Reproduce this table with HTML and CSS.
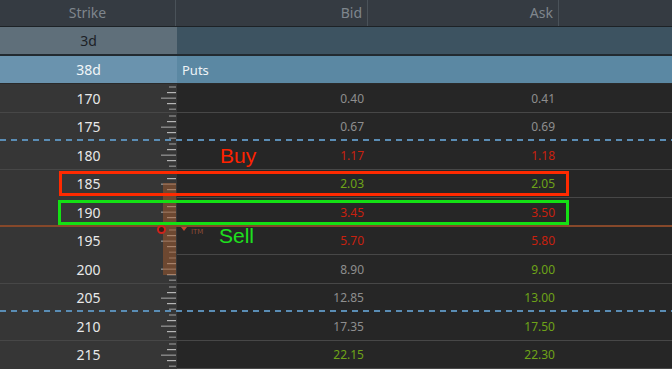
FILE: index.html
```html
<!DOCTYPE html>
<html>
<head>
<meta charset="utf-8">
<link rel="stylesheet" href="styles.css">
</head>
<body>
<div class="chain">
  <div class="hdr">
    <div class="hcell c-strike center">Strike</div>
    <div class="hcell right">Bid</div>
    <div class="hcell right">Ask</div>
    <div class="hcell"></div>
  </div>
  <div class="exp exp-3d">
    <div class="ecell c-strike center">3d</div>
    <div class="ecell"></div>
  </div>
  <div class="exp exp-38d">
    <div class="ecell c-strike center">38d</div>
    <div class="ecell puts">Puts</div>
  </div>

  <div class="rows">
    <div class="row"><div class="strike"><span class="sv">170</span><svg class="ruler" viewBox="0 0 16 28" preserveAspectRatio="none"><use href="#ticks"/></svg></div><div class="num gray">0.40</div><div class="num gray">0.41</div><div></div></div>
    <div class="row dash"><div class="strike"><span class="sv">175</span><svg class="ruler" viewBox="0 0 16 28" preserveAspectRatio="none"><use href="#ticks"/></svg></div><div class="num gray">0.67</div><div class="num gray">0.69</div><div></div></div>
    <div class="row"><div class="strike"><span class="sv">180</span><svg class="ruler" viewBox="0 0 16 28" preserveAspectRatio="none"><use href="#ticks"/></svg></div><div class="num red">1.17</div><div class="num red">1.18</div><div></div></div>
    <div class="row"><div class="strike"><span class="sv">185</span><svg class="ruler" viewBox="0 0 16 28" preserveAspectRatio="none"><use href="#ticks"/></svg></div><div class="num green">2.03</div><div class="num green">2.05</div><div></div></div>
    <div class="row"><div class="strike"><span class="sv">190</span><svg class="ruler" viewBox="0 0 16 28" preserveAspectRatio="none"><use href="#ticks"/></svg></div><div class="num red">3.45</div><div class="num red">3.50</div><div></div></div>
    <div class="row"><div class="strike"><span class="sv">195</span><svg class="ruler" viewBox="0 0 16 28" preserveAspectRatio="none"><use href="#ticks"/></svg></div><div class="num red">5.70</div><div class="num red">5.80</div><div></div></div>
    <div class="row"><div class="strike"><span class="sv">200</span><svg class="ruler" viewBox="0 0 16 28" preserveAspectRatio="none"><use href="#ticks"/></svg></div><div class="num gray">8.90</div><div class="num green">9.00</div><div></div></div>
    <div class="row dash"><div class="strike"><span class="sv">205</span><svg class="ruler" viewBox="0 0 16 28" preserveAspectRatio="none"><use href="#ticks"/></svg></div><div class="num gray">12.85</div><div class="num green">13.00</div><div></div></div>
    <div class="row"><div class="strike"><span class="sv">210</span><svg class="ruler" viewBox="0 0 16 28" preserveAspectRatio="none"><use href="#ticks"/></svg></div><div class="num gray">17.35</div><div class="num green">17.50</div><div></div></div>
    <div class="row"><div class="strike"><span class="sv">215</span><svg class="ruler" viewBox="0 0 16 28" preserveAspectRatio="none"><use href="#ticks"/></svg></div><div class="num green">22.15</div><div class="num green">22.30</div><div></div></div>
  </div>

  <svg class="defs" width="0" height="0">
    <defs>
      <g id="ticks">
        <rect x="9" y="2.4" width="7" height="1.2" fill="#8f8f8f"/>
        <rect x="7" y="8" width="9" height="1.2" fill="#b5b5b5"/>
        <rect x="1" y="13.5" width="15" height="1.4" fill="#8a8a8a"/>
        <rect x="7" y="19" width="9" height="1.2" fill="#b5b5b5"/>
        <rect x="9" y="24.6" width="7" height="1.2" fill="#8f8f8f"/>
      </g>
    </defs>
  </svg>

  <div class="itm-bar"></div>
  <div class="itm-line"></div>
  <div class="itm-dot"></div>
  <div class="itm-tag"><span class="tri"></span><span class="itm-text">ITM</span></div>

  <div class="box box-buy"></div>
  <div class="box box-sell"></div>
  <div class="label label-buy">Buy</div>
  <div class="label label-sell">Sell</div>
</div>
</body>
</html>
```

FILE: styles.css
```css
* { box-sizing: border-box; }
html, body { margin: 0; padding: 0; background: #262626; }
body { width: 672px; height: 369px; overflow: hidden; }

.chain {
  position: relative;
  width: 672px;
  height: 369px;
  overflow: hidden;
  font-family: "Noto Sans", "DejaVu Sans", sans-serif;
  background: #262626;
}

.hdr {
  display: grid;
  grid-template-columns: 176px 192px 191px 113px;
  height: 27px;
  background: #353b42;
  border-bottom: 1px solid #1d2226;
}
.hcell {
  display: flex;
  align-items: center;
  font-size: 14px;
  color: #7f868d;
  border-right: 1px solid #4a5259;
  padding: 0 5px 1px;
}
.hcell:last-child { border-right: none; }
.center { justify-content: center; }
.right { justify-content: flex-end; }

.exp {
  display: grid;
  grid-template-columns: 177px 1fr;
  font-size: 14px;
}
.ecell { display: flex; align-items: center; }
.exp-3d { height: 29px; border-bottom: 2px solid #222a30; }
.exp-3d .c-strike { background: #5f6f7a; color: #1c2127; }
.exp-3d .ecell:last-child { background: #3d5361; }
.exp-38d { height: 28px; border-bottom: 1px solid #2a2a2a; }
.exp-38d .c-strike { background: #6a93ae; color: #f2f6f8; }
.exp-38d .ecell:last-child { background: #5b88a3; }
.puts { padding-left: 5px; color: #eef3f6; font-size: 13px; }

.rows { display: flex; flex-direction: column; }
.row {
  position: relative;
  display: grid;
  grid-template-columns: 177px 191px 191px 113px;
  height: 28.56px;
  border-bottom: 1px solid #474747;
}
.row.dash { border-bottom-color: transparent; }
.row.dash::after {
  content: "";
  position: absolute;
  left: 0; right: 0; bottom: -1px;
  height: 2px;
  background: repeating-linear-gradient(to right, #5a8db5 0 6px, transparent 6px 11px);
}
.strike {
  display: grid;
  grid-template-columns: 1fr;
  align-items: center;
  justify-items: center;
  background: #363636;
  position: relative;
}
.sv { font-size: 14px; color: #e8e8e8; grid-area: 1 / 1; }
.ruler {
  grid-area: 1 / 1;
  justify-self: end;
  width: 16px;
  height: 100%;
  margin-right: 1px;
}
.num {
  display: flex;
  align-items: center;
  justify-content: flex-end;
  padding-right: 4px;
  font-size: 12px;
}
.gray { color: #8e8e8e; }
.red { color: #c8210f; }
.green { color: #6ea318; }

.defs { position: absolute; }

.itm-bar {
  position: absolute;
  left: 163px; top: 183px;
  width: 13px; height: 92px;
  background: rgba(155, 88, 45, 0.55);
}
.itm-line {
  position: absolute;
  left: 0; right: 0; top: 225px;
  height: 2px;
  background: #86482a;
}
.itm-dot {
  position: absolute;
  left: 157px; top: 225px;
  width: 9px; height: 9px;
  border-radius: 50%;
  border: 2px solid #d0231c;
  background: #3a1c18;
}
.itm-tag {
  position: absolute;
  left: 181px; top: 226px;
  display: flex;
  align-items: flex-start;
  gap: 4px;
}
.tri {
  width: 0; height: 0;
  border-left: 3px solid transparent;
  border-right: 3px solid transparent;
  border-top: 4px solid #c04a30;
  margin-top: 1px;
}
.itm-text {
  font-family: "DejaVu Sans", sans-serif;
  font-size: 7px;
  color: #8c4c36;
  margin-top: 2px;
}

.box {
  position: absolute;
  border: 3px solid;
}
.box-buy { left: 59px; top: 171px; width: 510px; height: 25px; border-color: #ff2a00; }
.box-sell { left: 58px; top: 200px; width: 511px; height: 25px; border-color: #14e014; }

.label {
  position: absolute;
  font-family: "Liberation Sans", Arial, sans-serif;
  font-size: 21px;
  line-height: 1;
}
.label-buy { left: 220px; top: 145px; color: #ff2200; }
.label-sell { left: 219px; top: 225px; color: #1ee01e; }
```
